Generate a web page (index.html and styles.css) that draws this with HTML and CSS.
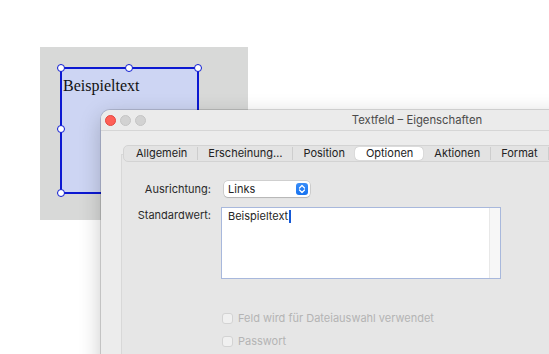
FILE: index.html
```html
<!DOCTYPE html>
<html lang="de">
  <head>
    <meta charset="UTF-8" />
    <meta name="viewport" content="width=device-width, initial-scale=1.0" />
    <title>Textfeld – Eigenschaften</title>
    <link rel="stylesheet" href="styles.css">
  </head>

  <body>
    <div class="desktop">
      <!-- Document canvas with the selected text field -->
      <div class="canvas">
        <div class="field">
          <span class="field-text">Beispieltext</span>
          <span class="handle h-tl"></span>
          <span class="handle h-tm"></span>
          <span class="handle h-tr"></span>
          <span class="handle h-ml"></span>
          <span class="handle h-bl"></span>
        </div>
      </div>

      <!-- Properties window -->
      <div class="window">
        <div class="titlebar">
          <div class="lights">
            <span class="light red"></span>
            <span class="light"></span>
            <span class="light"></span>
          </div>
          <div class="title">Textfeld – Eigenschaften</div>
        </div>

        <div class="tabview">
          <div class="tabs">
            <span class="tab">Allgemein</span>
            <span class="tab">Erscheinung…</span>
            <span class="tab">Position</span>
            <span class="tab selected">Optionen</span>
            <span class="tab">Aktionen</span>
            <span class="tab">Format</span>
            <span class="tab tab-more"></span>
          </div>

          <div class="panel">
            <div class="form">
              <label class="form-label">Ausrichtung:</label>
              <div class="popup">
                <span>Links</span>
                <span class="stepper">
                  <svg width="8" height="10" viewBox="0 0 8 10">
                    <path d="M1.5 4 L4 1.5 L6.5 4 M1.5 6 L4 8.5 L6.5 6" fill="none" stroke="#fff" stroke-width="1.3" stroke-linecap="round" stroke-linejoin="round"/>
                  </svg>
                </span>
              </div>

              <label class="form-label">Standardwert:</label>
              <div class="textbox">
                <div class="textbox-text">Beispieltext<span class="caret"></span></div>
                <div class="scrolltrack"></div>
              </div>
            </div>

            <div class="checks">
              <label class="check"><span class="box"></span>Feld wird für Dateiauswahl verwendet</label>
              <label class="check"><span class="box"></span>Passwort</label>
            </div>
          </div>
        </div>
      </div>
    </div>
  </body>
</html>
```

FILE: styles.css
```css
/* Global Styles */
body {
  margin: 0;
  padding: 0;
  background: #fff;
  font-family: "Inter", "Liberation Sans", sans-serif;
  color: #262626;
  overflow: hidden;
}

.desktop {
  position: relative;
  width: 549px;
  height: 354px;
  overflow: hidden;
}

/* Canvas */
.canvas {
  position: absolute;
  left: 40px;
  top: 47px;
  width: 208px;
  height: 173px;
  background: #d8d9d8;
}

.field {
  position: absolute;
  left: 20px;
  top: 20px;
  width: 135px;
  height: 123px;
  border: 2px solid #0b18d2;
  background: #cdd5f3;
}

.field-text {
  display: block;
  padding: 8px 0 0 1px;
  font-family: "Liberation Serif", serif;
  font-size: 16px;
  color: #111;
}

.handle {
  position: absolute;
  width: 6px;
  height: 6px;
  border: 1px solid #0b18d2;
  border-radius: 50%;
  background: #fff;
}

.h-tl { left: -5px; top: -5px; }
.h-tm { left: 63px; top: -5px; }
.h-tr { right: -5px; top: -5px; }
.h-ml { left: -5px; top: 56px; }
.h-bl { left: -5px; bottom: -5px; }

/* Window */
.window {
  position: absolute;
  left: 101px;
  top: 110px;
  width: 632px;
  height: 300px;
  background: #ececec;
  border-radius: 9px 9px 0 0;
  box-shadow: 0 0 0 1px rgba(0, 0, 0, 0.14), 0 6px 22px rgba(0, 0, 0, 0.22);
  overflow: hidden;
}

.titlebar {
  display: flex;
  align-items: center;
  height: 20px;
  padding: 0 4px;
  background: #ebebeb;
  border-bottom: 1px solid #d6d6d6;
}

.lights {
  display: flex;
  gap: 4px;
  width: 60px;
}

.light {
  width: 9px;
  height: 9px;
  border-radius: 50%;
  background: #d2d2d2;
  border: 1px solid #c4c4c4;
}

.light.red {
  background: #fe5f57;
  border-color: #e2463f;
}

.title {
  flex: 1;
  margin-right: 60px;
  text-align: center;
  font-size: 11.3px;
  color: #4a4a4a;
}

.tabview {
  margin: 14px 0 0 20px;
}

.tabs {
  position: relative;
  z-index: 1;
  display: flex;
  align-items: center;
  height: 15px;
  margin-left: 2px;
  padding: 0 1px;
  background: #e3e3e3;
  border: 1px solid #d3d3d3;
  border-radius: 5px;
  font-size: 11px;
  color: #222;
}

.tab {
  padding: 0 10px;
  line-height: 13px;
  border-left: 1px solid #cdcdcd;
}

.tab-more {
  height: 13px;
  width: 60px;
}

.tab:first-child,
.tab.selected,
.tab.selected + .tab {
  border-left-color: transparent;
}

.tab.selected {
  background: #fff;
  border-radius: 4px;
  box-shadow: 0 0 1px rgba(0, 0, 0, 0.35);
}

.panel {
  margin-top: -8px;
  height: 220px;
  padding-top: 26px;
  background: #e6e6e6;
  border: 1px solid #d8d8d8;
  border-right: none;
}

.form {
  display: grid;
  grid-template-columns: 89px auto;
  column-gap: 10px;
  row-gap: 10px;
  align-items: start;
  font-size: 11px;
}

.form-label {
  text-align: right;
  line-height: 16px;
  color: #2a2a2a;
}

.popup {
  display: flex;
  align-items: center;
  justify-content: space-between;
  width: 80px;
  height: 16px;
  margin-left: 3px;
  padding: 0 2px 0 4px;
  background: #fff;
  border-radius: 4px;
  box-shadow: 0 0 0 0.5px rgba(0, 0, 0, 0.2), 0 1px 1px rgba(0, 0, 0, 0.12);
}

.stepper {
  display: flex;
  align-items: center;
  justify-content: center;
  width: 12px;
  height: 12px;
  border-radius: 3px;
  background: linear-gradient(#3a8ef8, #1672f0);
}

.textbox {
  display: flex;
  width: 278px;
  height: 70px;
  background: #fff;
  border: 1px solid #a8b8dc;
}

.textbox-text {
  flex: 1;
  padding: 2px 6px;
  line-height: 13px;
}

.caret {
  display: inline-block;
  width: 2px;
  height: 13px;
  margin-left: 1px;
  vertical-align: top;
  background: #1559d6;
}

.scrolltrack {
  width: 10px;
  background: #f7f7f7;
  border-left: 1px solid #e8e8e8;
}

.checks {
  display: flex;
  flex-direction: column;
  gap: 10px;
  margin: 33px 0 0 100px;
  font-size: 11px;
  color: #b4b4b4;
}

.check {
  display: flex;
  align-items: center;
  gap: 5px;
  line-height: 13px;
}

.box {
  width: 9px;
  height: 9px;
  border: 1px solid #d3d3d3;
  border-radius: 3px;
  background: #f0f0f0;
}
```
